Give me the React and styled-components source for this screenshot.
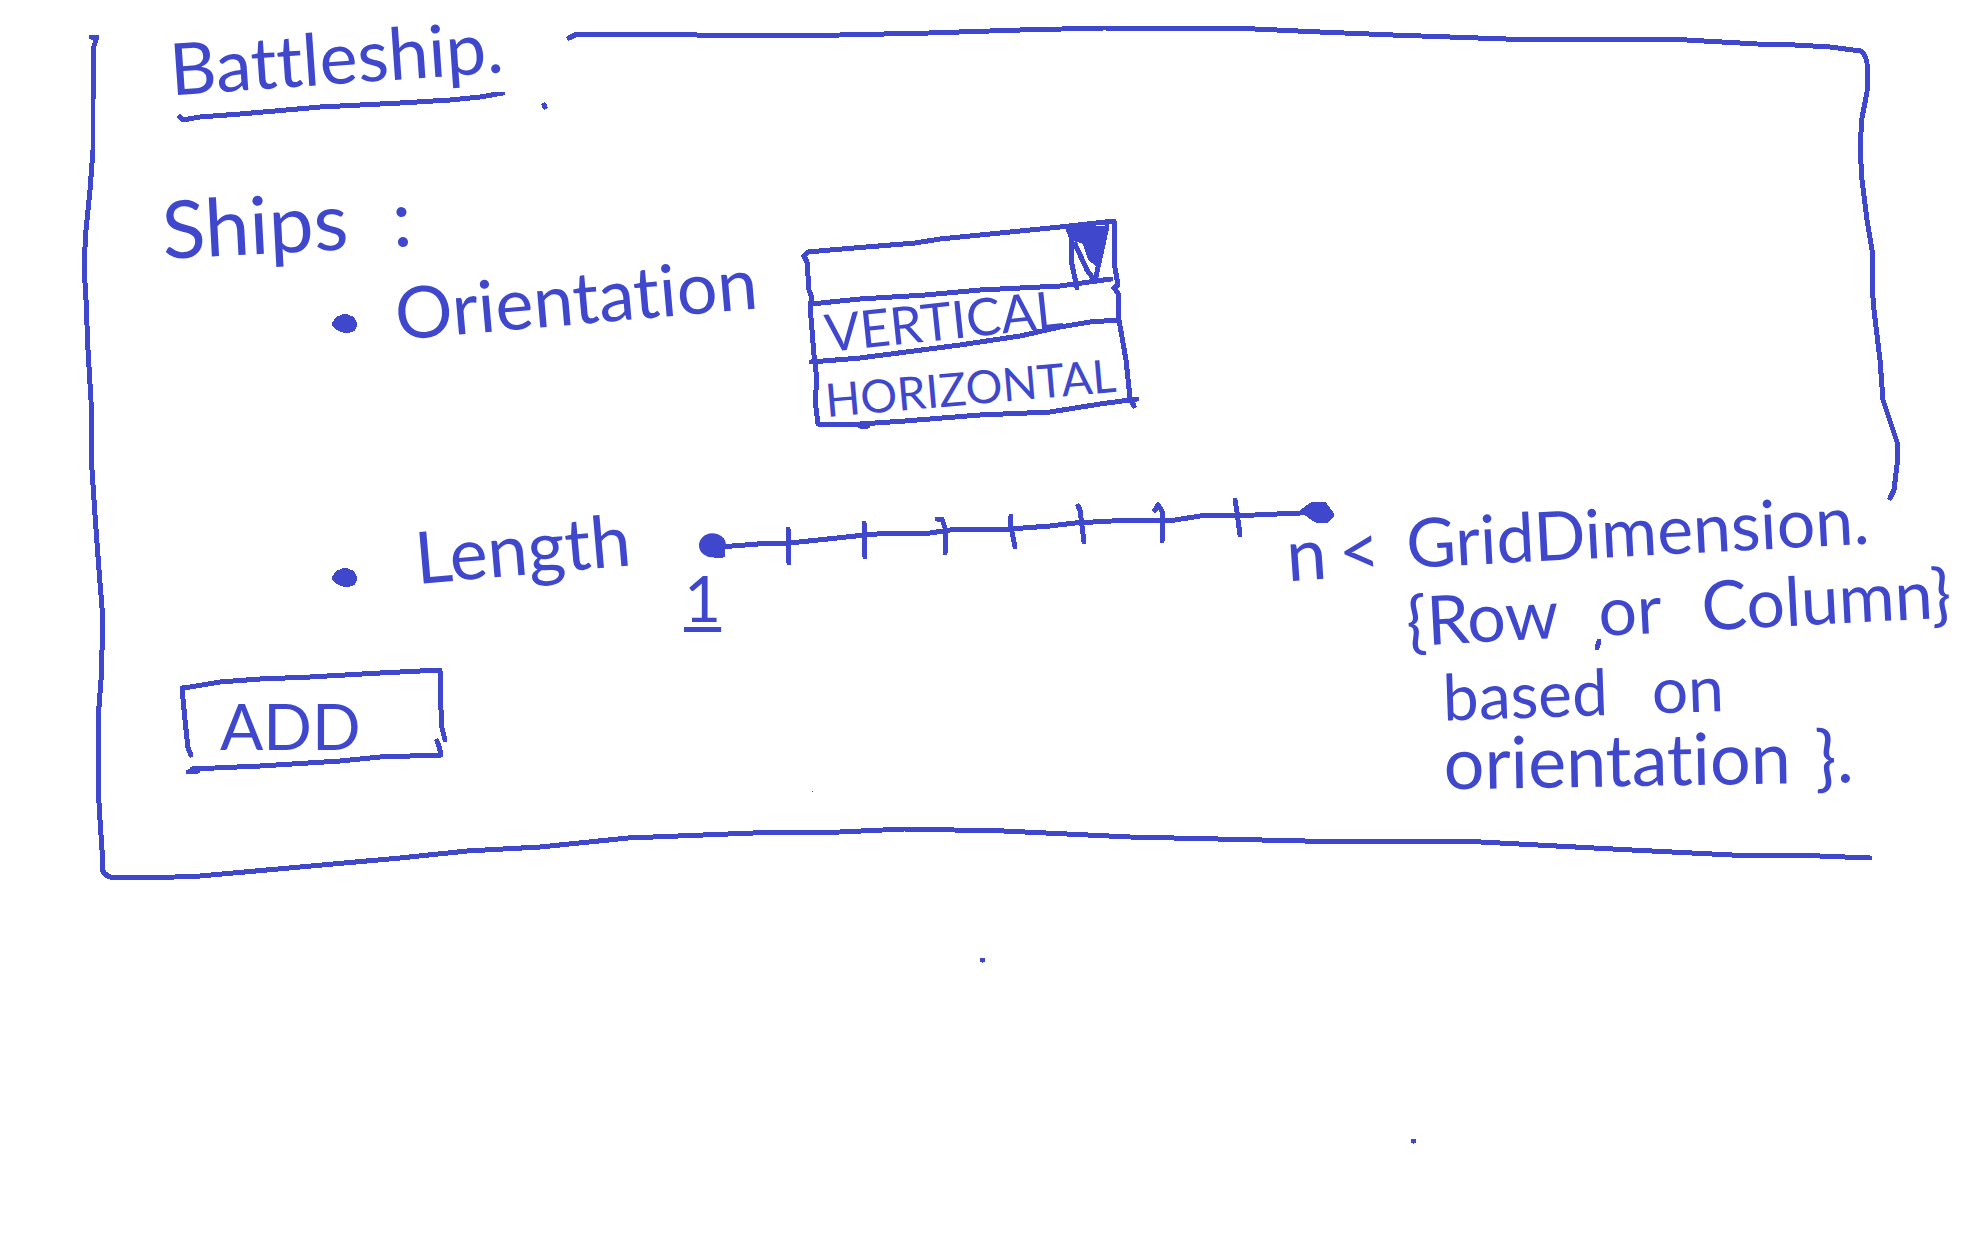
import React from "react";
import styled, { createGlobalStyle } from "styled-components";

const INK = "#3f48cc";

const GlobalStyle = createGlobalStyle`
  *, *::before, *::after { box-sizing: border-box; }
  body {
    margin: 0;
    background: #fff;
    color: ${INK};
    font-family: Lato, "Liberation Sans", sans-serif;
    font-variant-ligatures: none;
  }
`;

const Page = styled.main`
  position: relative;
  min-height: 100vh;
  padding: 32px 0 0 164px;
  overflow: hidden;
`;

const Ink = styled.svg`
  display: block;
  fill: none;
  stroke: ${INK};
  stroke-width: 5px;
  stroke-linecap: round;
  stroke-linejoin: round;
  shape-rendering: crispEdges;
  pointer-events: none;
`;

const Backdrop = styled(Ink)`
  position: absolute;
  inset: 0;
  width: 100%;
  height: 100%;
`;

const Title = styled.h1`
  width: fit-content;
  margin: 0;
  padding-left: 8px;
  font-size: 72px;
  line-height: 72px;
  font-weight: 400;
  transform: rotate(-4deg);
  transform-origin: left bottom;
`;

const Underline = styled(Ink)`
  width: 344px;
  height: 32px;
  margin: -12px 0 0 12px;
`;

const Form = styled.form`
  position: relative;
  margin-top: 64px;
`;

const TopGrid = styled.div`
  display: grid;
  grid-template-columns: minmax(0, 640fr) minmax(0, 1164fr);
  grid-template-rows: 80px 1fr;
  row-gap: 8px;
`;

const BottomGrid = styled.div`
  display: grid;
  grid-template-columns: minmax(0, 520fr) minmax(0, 724fr) minmax(0, 560fr);
  margin-top: 68px;
`;

const Heading = styled.h2`
  display: flex;
  gap: 44px;
  width: fit-content;
  margin: 0;
  font-size: 80px;
  line-height: 80px;
  font-weight: 400;
  transform: rotate(-3deg);
  transform-origin: left bottom;
`;

const Item = styled.div`
  display: flex;
  align-items: flex-start;
  gap: ${(p) => p.$gap}px;
  padding-left: 166px;
`;

const Bullet = styled(Ink)`
  flex: none;
  width: 28px;
  height: 24px;
  margin-top: ${(p) => p.$drop}px;
  fill: ${INK};
`;

const Label = styled.label`
  font-size: 72px;
  line-height: 72px;
  white-space: nowrap;
  transform: rotate(-5deg);
  transform-origin: left bottom;
`;

const Dropdown = styled.div`
  position: relative;
  grid-column: 2;
  grid-row: 1 / span 2;
  width: 338px;
  height: 212px;
  margin-top: 30px;
`;

const Select = styled.select`
  display: block;
  width: 100%;
  height: 84px;
  padding: 0 72px 0 16px;
  border: 0;
  background: transparent;
  color: ${INK};
  font: inherit;
  font-size: 48px;
  appearance: none;
  outline: none;
`;

const Options = styled.ul`
  display: grid;
  justify-items: start;
  gap: 8px;
  margin: 0;
  padding: 0 0 0 24px;
  list-style: none;
`;

const Option = styled.li`
  font-size: ${(p) => p.$size}px;
  line-height: 60px;
  white-space: nowrap;
  transform: rotate(${(p) => p.$tilt}deg);
  transform-origin: left bottom;
`;

const LeftColumn = styled.div`
  display: flex;
  flex-direction: column;
  align-items: flex-start;
  gap: 72px;
  padding-top: 22px;
`;

const AddButton = styled.button`
  position: relative;
  width: 272px;
  height: 112px;
  margin-left: 12px;
  padding: 12px 0 0 44px;
  border: 0;
  background: transparent;
  color: ${INK};
  font: inherit;
  font-size: 64px;
  line-height: 72px;
  text-align: left;
  cursor: pointer;
`;

const Scale = styled.div`
  min-width: 0;
`;

const Track = styled.div`
  position: relative;
  width: 692px;
  max-width: 100%;
  height: 68px;
`;

const Range = styled.input`
  position: absolute;
  left: 15px;
  top: 36px;
  width: 632px;
  height: 24px;
  margin: 0;
  background: transparent;
  appearance: none;
  outline: none;
  transform: rotate(-3deg);
  transform-origin: left center;

  &::-webkit-slider-thumb {
    appearance: none;
    width: 27px;
    height: 24px;
    border-radius: 50%;
    background: ${INK};
  }
`;

const Ends = styled.div`
  display: flex;
  align-items: flex-start;
  justify-content: space-between;
  margin-top: -52px;
  padding-right: 28px;
  line-height: 72px;
`;

const MinValue = styled.span`
  margin-top: 48px;
  font-size: 64px;
  text-decoration: underline;
  text-decoration-thickness: 5px;
  text-underline-offset: 5px;
`;

const MaxValue = styled.span`
  display: flex;
  gap: 12px;
  font-size: 72px;
  transform: rotate(-4deg);
`;

const Note = styled.div`
  display: grid;
  justify-items: start;
  gap: 6px;
  padding-top: 8px;
`;

const NoteLine = styled.div`
  display: flex;
  gap: ${(p) => p.$gap || 0}px;
  padding-left: ${(p) => p.$indent || 0}px;
  font-size: ${(p) => p.$size}px;
  line-height: ${(p) => (p.$tight ? 44 : 72)}px;
  white-space: nowrap;
  transform: rotate(${(p) => p.$tilt}deg);
  transform-origin: left bottom;
`;

function Frame() {
  return (
    <Backdrop viewBox="0 0 1968 1248" preserveAspectRatio="none" aria-hidden="true">
      <path d="M91 37 L97 37 L94 46 L93 100 L93 150 L90 190 L86 230 L84 265 L86 300 L88 350 L91 400 L92 470 L95 515 L99 570 L103 620 L101 680 L98 720 L98 785 L100 820 L102 850 L102 868 Q104 878 118 878 L175 877 L200 876 L300 867 L400 858 L467 851 L540 847 L628 838 L753 833 L840 832 L904 829 L1004 831 L1130 837 L1305 841 L1462 841 L1632 850 L1732 855 L1795 855 L1870 858" />
      <path d="M569 38 L577 34 L640 34 L753 36 L840 35 L929 33 L1020 30 L1104 28 L1255 29 L1320 32 L1393 35 L1506 39 L1669 39 L1757 44 L1795 45 L1830 47 L1861 51 Q1866 53 1868 70 L1867 92 L1862 118 L1860 147 L1862 180 L1867 220 L1872 250 L1872 285 L1874 310 L1880 360 L1883 400 L1891 424 L1898 445 L1897 465 L1894 490 L1890 498" />
      <path d="M544 105 L545 107 M1599 641 L1597 648" />
      <path d="M982 960 h1 M1413 1141 h1" />
      <path d="M812 791 h1" style={{ strokeWidth: 1 }} />
    </Backdrop>
  );
}

function DropdownInk() {
  return (
    <Backdrop viewBox="804 218 338 212" overflow="visible" aria-hidden="true">
      <path d="M804 256 L808 252 L830 250 L915 243 L940 239 L1020 231 L1060 227 L1114 221 L1114 262 L1118 285 L1114 288 L1118 293 L1119 320 L1126 360 L1130 398 L1134 406" />
      <path d="M804 256 L807 262 L809 290 L812 298 L810 305 L814 355 L817 380 L815 400 L818 424 L860 424 L905 421 L980 415 L1050 412 L1100 404 L1137 399" />
      <path d="M811 304 L860 299 L925 295 L980 290 L1060 286 L1111 279" />
      <path d="M811 362 L860 358 L960 345 L1020 336 L1060 327 L1090 322 L1119 320" />
      <path d="M1068 229 L1071 236 L1071 260 L1077 288" />
      <path d="M860 426 L868 426" />
      <path d="M1069 230 L1105 228 L1097 264 L1090 258 L1085 242 L1074 238 Z" fill={INK} />
      <path d="M1075 244 L1087 270 L1095 281 L1107 226" />
    </Backdrop>
  );
}

function TrackInk() {
  return (
    <Backdrop viewBox="684 498 692 68" preserveAspectRatio="xMinYMin meet" aria-hidden="true">
      <path d="M704 542 L712 538 L722 540 L723 555 L714 555 Z" fill={INK} />
      <path d="M720 547 L770 543 L790 543 L865 535 L890 533 L930 533 L950 530 L1010 529 L1050 526 L1075 523 L1130 520 L1175 520 L1200 516 L1255 515 L1300 513 L1315 512" />
      <path d="M788 529 L789 563 M864 523 L865 557 M937 519 L942 519 L945 528 L945 553 M1011 516 L1010 522 L1015 547 M1078 506 L1080 510 L1084 542 M1155 510 L1158 505 L1162 511 L1162 541 M1235 500 L1237 512 L1240 535" />
      <path d="M1303 511 L1313 504 L1324 504 L1332 515 L1326 521 L1316 520 Z" fill={INK} />
    </Backdrop>
  );
}

function ButtonInk() {
  return (
    <Backdrop viewBox="176 664 272 112" aria-hidden="true">
      <path d="M191 755 L188 748 L185 720 L182 688 L190 687 L220 682 L260 679 L310 677 L380 673 L440 670 L441 710 L442 728 L445 740" />
      <path d="M188 772 L198 771 L192 769 L260 766 L340 761 L380 757 L441 755 L439 746 L437 741" />
    </Backdrop>
  );
}

function Dot({ drop }) {
  return (
    <Bullet viewBox="0 0 28 24" $drop={drop} aria-hidden="true">
      <path d="M4 12 L8 7 L15 4 L22 7 L25 12 L23 17 L16 19 L8 16 Z" />
    </Bullet>
  );
}

export default function App() {
  return (
    <>
      <GlobalStyle />
      <Page>
        <Frame />
        <Title>Battleship.</Title>
        <Underline viewBox="176 92 344 32" aria-hidden="true">
          <path d="M180 117 L183 120 L200 117 L240 114 L275 111 L320 107 L400 103 L450 100 L480 97 L503 93" />
        </Underline>

        <Form onSubmit={(e) => e.preventDefault()}>
          <TopGrid>
            <Heading>
              <span>Ships</span>
              <span>:</span>
            </Heading>
            <Item $gap={40}>
              <Dot drop={36} />
              <Label htmlFor="orientation">Orientation</Label>
            </Item>
            <Dropdown>
              <DropdownInk />
              <Select id="orientation" defaultValue="">
                <option value="" aria-label="None" />
                <option value="v">VERTICAL</option>
                <option value="h">HORIZONTAL</option>
              </Select>
              <Options>
                <Option $size={52} $tilt={-6}>VERTICAL</Option>
                <Option $size={46} $tilt={-5}>HORIZONTAL</Option>
              </Options>
            </Dropdown>
          </TopGrid>

          <BottomGrid>
            <LeftColumn>
              <Item $gap={60}>
                <Dot drop={46} />
                <Label htmlFor="length">Length</Label>
              </Item>
              <AddButton type="submit">
                <ButtonInk />
                ADD
              </AddButton>
            </LeftColumn>

            <Scale>
              <Track>
                <TrackInk />
                <Range id="length" type="range" min="1" max="9" defaultValue="1" />
              </Track>
              <Ends>
                <MinValue>1</MinValue>
                <MaxValue>
                  <span>n</span>
                  <span>&lt;</span>
                </MaxValue>
              </Ends>
            </Scale>

            <Note>
              <NoteLine $size={68} $tilt={-3}>GridDimension.</NoteLine>
              <NoteLine $size={68} $tilt={-3} $gap={40}>
                <span>{"{Row"}</span>
                <span>or</span>
                <span>{"Column}"}</span>
              </NoteLine>
              <NoteLine $size={64} $tilt={-2} $gap={44} $indent={36}>
                <span>based</span>
                <span>on</span>
              </NoteLine>
              <NoteLine $size={72} $tilt={-1} $gap={24} $indent={36} $tight>
                <span>orientation</span>
                <span>{"}."}</span>
              </NoteLine>
            </Note>
          </BottomGrid>
        </Form>
      </Page>
    </>
  );
}
